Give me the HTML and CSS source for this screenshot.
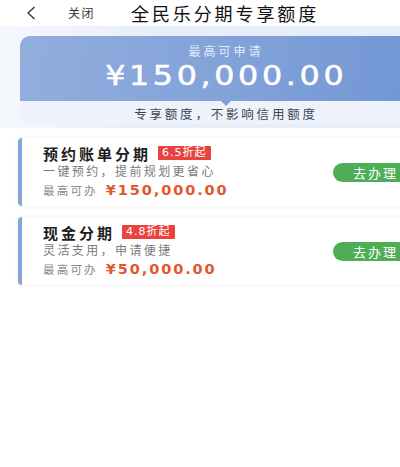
FILE: index.html
```html
<!DOCTYPE html>
<html lang="zh-CN">
<head>
<meta charset="utf-8">
<title>全民乐分期专享额度</title>
<link rel="stylesheet" href="styles.css">
</head>
<body>
<div class="page">
  <header class="topbar">
    <span class="back"><svg width="10" height="14" viewBox="0 0 10 14"><path d="M8.5 1 L2 7 L8.5 13" fill="none" stroke="#333" stroke-width="1.3"/></svg></span>
    <span class="close">关闭</span>
    <h1 class="title">全民乐分期专享额度</h1>
  </header>

  <section class="band">
    <div class="quota">
      <div class="quota-main">
        <div class="quota-label">最高可申请</div>
        <div class="quota-amount"><span class="quota-num">¥150,000.00</span></div>
      </div>
      <div class="quota-foot">专享额度，不影响信用额度</div>
    </div>
  </section>

  <section class="list">
    <div class="card">
      <div class="card-body">
        <div class="card-title">预约账单分期<span class="badge">6.5折起</span></div>
        <div class="card-desc">一键预约，提前规划更省心</div>
        <div class="card-limit"><span class="limit-label">最高可办</span><span class="limit-num">¥150,000.00</span></div>
      </div>
      <button class="go">去办理</button>
    </div>
    <div class="card">
      <div class="card-body">
        <div class="card-title">现金分期<span class="badge">4.8折起</span></div>
        <div class="card-desc">灵活支用，申请便捷</div>
        <div class="card-limit"><span class="limit-label">最高可办</span><span class="limit-num">¥50,000.00</span></div>
      </div>
      <button class="go">去办理</button>
    </div>
  </section>
</div>
</body>
</html>
```

FILE: styles.css
```css
* { box-sizing: border-box; }
html, body { margin: 0; padding: 0; background: #ffffff; }
body {
  font-family: "Noto Sans CJK SC", "Noto Sans", sans-serif;
  color: #222;
}
.page {
  width: 400px;
  min-height: 467px;
  overflow: hidden;
  background: #ffffff;
}

/* top bar */
.topbar {
  height: 26px;
  display: flex;
  align-items: center;
  background: #fff;
}
.back {
  display: flex;
  margin-left: 26px;
  width: 10px;
  height: 14px;
}
.close {
  margin-left: 32px;
  font-size: 12px;
  letter-spacing: 1.5px;
  color: #333;
  line-height: 26px;
}
.title {
  margin: 0 0 0 36px;
  font-size: 18px;
  font-weight: 400;
  letter-spacing: 2.9px;
  color: #111;
  line-height: 26px;
  white-space: nowrap;
}

/* blue band */
.band {
  padding: 10px 0 4px 20px;
  background: linear-gradient(90deg, #f5f8fd 0%, #e8eef9 35%, #e6edf8 100%);
}
.quota {
  width: 412px;
  border-radius: 10px 0 0 10px;
  overflow: hidden;
  background: #eef3fb;
}
.quota-main {
  position: relative;
  height: 65px;
  padding-top: 7px;
  text-align: center;
  background: linear-gradient(100deg, #92aedd 0%, #82a2d9 50%, #7196d4 100%);
}
.quota-main::after {
  content: "";
  position: absolute;
  left: 201px;
  bottom: -5px;
  border-left: 5px solid transparent;
  border-right: 5px solid transparent;
  border-top: 5px solid #80a0d8;
}
.quota-label {
  font-size: 12px;
  line-height: 16px;
  letter-spacing: 3px;
  color: #e3ebf8;
}
.quota-amount {
  height: 34px;
  line-height: 34px;
}
.quota-num {
  display: inline-block;
  font-family: "DejaVu Sans", sans-serif;
  font-size: 26px;
  letter-spacing: 3px;
  color: #ffffff;
  -webkit-text-stroke: 0.5px #ffffff;
  transform: scaleX(1.22);
  transform-origin: center;
}
.quota-foot {
  height: 23px;
  line-height: 25px;
  text-align: center;
  font-size: 12.5px;
  letter-spacing: 2.8px;
  color: #3d4656;
}

/* product list */
.list {
  padding: 10px 0 0 18px;
  display: flex;
  flex-direction: column;
  gap: 11px;
}
.card {
  width: 420px;
  height: 68px;
  display: flex;
  align-items: center;
  justify-content: space-between;
  padding: 0 15px 0 21px;
  background: #fff;
  border-left: 4px solid #87a5d9;
  border-radius: 4px 0 0 4px;
  box-shadow: 0 0 5px rgba(0, 0, 0, 0.07);
}
.card-body {
  display: flex;
  flex-direction: column;
}
.card-title {
  display: flex;
  align-items: center;
  height: 18px;
  font-size: 15px;
  font-weight: 700;
  letter-spacing: 3px;
  color: #1d1d1d;
}
.badge {
  margin-left: 7px;
  height: 14px;
  padding: 0 4px;
  line-height: 14px;
  font-size: 11px;
  font-weight: 400;
  letter-spacing: 1px;
  color: #fff;
  background: #e8433f;
  border-radius: 1px;
  font-family: "DejaVu Sans", "Noto Sans CJK SC", sans-serif;
}
.card-desc {
  height: 18px;
  line-height: 18px;
  font-size: 12px;
  letter-spacing: 2.4px;
  color: #7a7a7a;
}
.card-limit {
  height: 20px;
  display: flex;
  align-items: center;
}
.limit-label {
  font-size: 11.5px;
  letter-spacing: 2.2px;
  color: #888;
}
.limit-num {
  margin-left: 8px;
  font-family: "DejaVu Sans", sans-serif;
  font-weight: 700;
  font-size: 14.5px;
  letter-spacing: 1.9px;
  color: #e2572d;
}
.go {
  width: 90px;
  height: 19px;
  padding: 0 0 0 20px;
  border: none;
  border-radius: 10px;
  background: #4eae56;
  color: #fff;
  font-family: "Noto Sans CJK SC", sans-serif;
  font-size: 13px;
  letter-spacing: 2px;
  text-align: left;
  line-height: 19px;
}
```
